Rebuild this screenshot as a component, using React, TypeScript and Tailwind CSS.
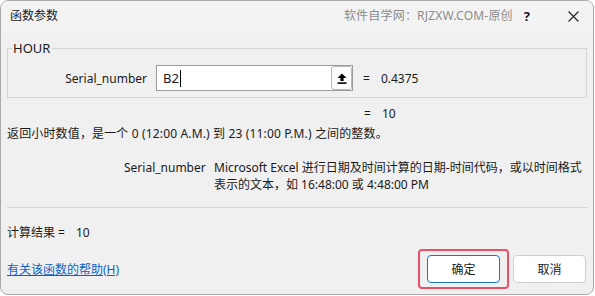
import React from "react";

const font = { fontFamily: '"Noto Sans", "Noto Sans CJK SC", sans-serif' };

function UpArrowIcon() {
  return (
    <svg width="10" height="11" viewBox="0 0 10 11">
      <path d="M5 0.5 L9.5 5 L6.6 5 L6.6 8 L3.4 8 L3.4 5 L0.5 5 Z" fill="#000" />
      <rect x="0.5" y="9.3" width="9" height="1.6" fill="#000" />
    </svg>
  );
}

export default function App() {
  return (
    <div className="w-[595px] h-[296px] bg-white text-[12px] text-[#1a1a1a]" style={font}>
      <div className="w-[594px] h-[295px] bg-[#f0f0f0] border border-[#a9a9a9] rounded-[8px] overflow-hidden flex flex-col">
        {/* title bar */}
        <div className="h-[30px] shrink-0 bg-[#f3f3f3] flex items-center pl-[9px] pr-[14px]">
          <span className="leading-[16px]">函数参数</span>
          <span className="ml-auto text-[#8c8c8c] leading-[16px] tracking-[0.2px]">软件自学网：RJZXW.COM-原创</span>
          <span className="ml-[11px] font-bold text-[13px] leading-[16px]">?</span>
          <svg className="ml-[38px]" width="11" height="11" viewBox="0 0 11 11">
            <path d="M0.5 0.5 L10.5 10.5 M10.5 0.5 L0.5 10.5" stroke="#222" strokeWidth="1.1" />
          </svg>
        </div>

        {/* body */}
        <div className="flex-1 flex flex-col px-[6px]">
          <fieldset className="mt-[9px] border border-[#d5d5d5] w-[580px] px-0 pb-[6px]">
            <legend className="ml-[4px] px-[1px] leading-[16px] text-[13px]">HOUR</legend>
            <div className="flex items-center pt-[9px]">
              <div className="w-[139px] text-right leading-[17px]">Serial_number</div>
              <div className="ml-[9px] flex items-center h-[26px] w-[197px] bg-white border border-[#9d9d9d]">
                <span className="pl-[6px] text-[13px] leading-[17px]">B2</span>
                <span className="w-px h-[17px] bg-black ml-[1px]" />
                <div className="ml-auto h-[24px] w-[21px] flex items-center justify-center bg-[#fdfdfd] border border-[#b8b8b8] rounded-[3px]">
                  <UpArrowIcon />
                </div>
              </div>
              <span className="ml-[10px] leading-[17px]">=</span>
              <span className="ml-[11px] leading-[17px]">0.4375</span>
            </div>
          </fieldset>

          <div className="mt-[7px] pl-[357px] leading-[17px] flex">
            <span>=</span>
            <span className="ml-[11px]">10</span>
          </div>

          <div className="mt-[3px] leading-[17px] tracking-[0.15px]">
            返回小时数值，是一个 0 (12:00 A.M.) 到 23 (11:00 P.M.) 之间的整数。
          </div>

          <div className="mt-[17px] flex leading-[17px]">
            <div className="pl-[117px] w-[207px] shrink-0">Serial_number</div>
            <div className="w-[378px]">
              Microsoft Excel 进行日期及时间计算的日期-时间代码，或以时间格式表示的文本，如 16:48:00 或 4:48:00 PM
            </div>
          </div>

          <div className="mt-[14px] border-t border-[#d5d5d5] w-[581px]" />

          <div className="mt-[16px] leading-[17px] flex">
            <span>计算结果 =</span>
            <span className="ml-[11px]">10</span>
          </div>

          <div className="mt-[8px] flex items-center">
            <a className="text-[#0a63c9] underline leading-[17px] cursor-pointer">有关该函数的帮助(H)</a>
            <div className="ml-auto border-2 border-[#ee4f68] rounded-[4px] px-[7px] py-[4px]">
              <button className="w-[73px] h-[28px] bg-white border border-[#1f6fd0] rounded-[4px] leading-[17px]">确定</button>
            </div>
            <button className="ml-[4px] mr-[1px] w-[73px] h-[28px] bg-white border border-[#cfcfcf] rounded-[4px] leading-[17px]">取消</button>
          </div>
        </div>
      </div>
    </div>
  );
}
